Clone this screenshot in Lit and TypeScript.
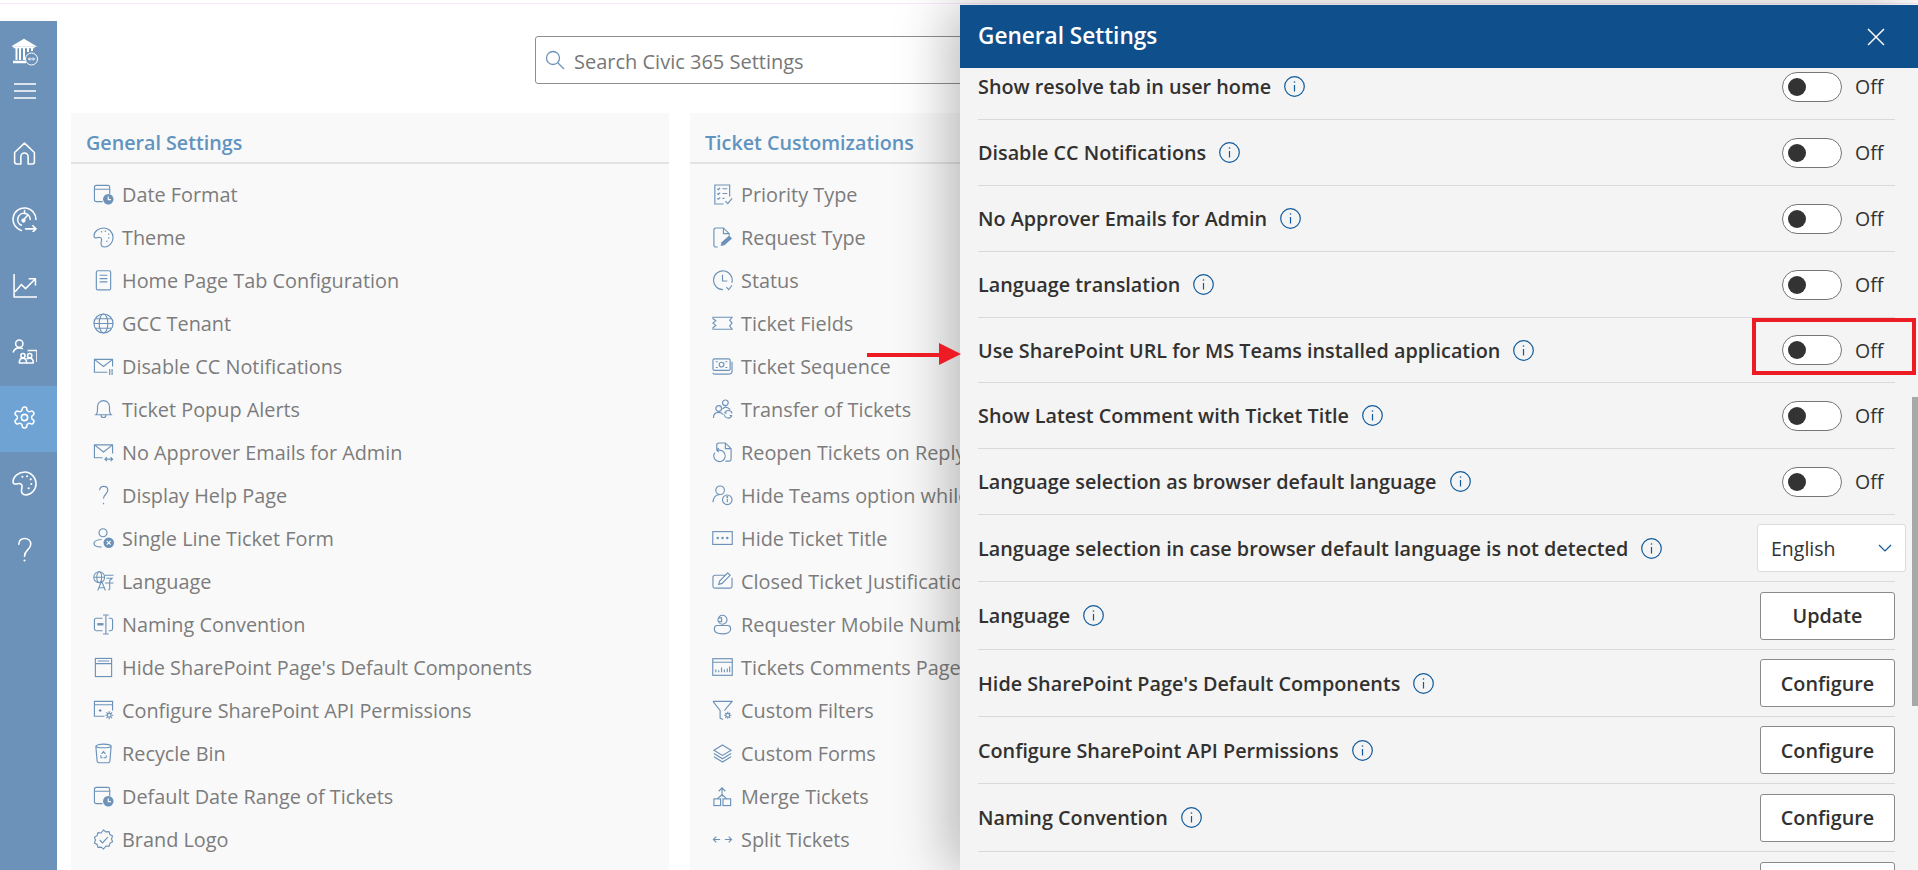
import { LitElement, html, css } from "lit";
import { customElement } from "lit/decorators.js";

const ICONS: Record<string, any> = {
  date: html`<svg viewBox="0 0 22 22" fill="none" stroke="currentColor" stroke-width="1.2"><path d="M10 18.500H3.500a2 2 0 0 1-2-2V3.500a2 2 0 0 1 2-2h12a2 2 0 0 1 2 2v7M1.500 5.500h16"/><circle cx="16" cy="16" r="5.500" fill="currentColor" stroke="none"/><path d="M16 13v3.300h2.800" stroke="#fff"/></svg>`,
  theme: html`<svg viewBox="0 0 22 22" fill="none" stroke="currentColor" stroke-width="1.2"><path d="M11.500 1C6 1 1 4.600 1 9.500c0 1.600 1.600 2.200 3.200 1.700 2.500-.8 4.800-.2 4.800 2 0 1.500-.6 2.300-.6 3.800 0 2.500 1.600 4 3.600 4 5 0 9-4.500 9-10S16.500 1 11.500 1z"/><g fill="currentColor" stroke="none"><circle cx="9" cy="5" r=".8"/><circle cx="13" cy="4.500" r=".8"/><circle cx="16.500" cy="7.500" r=".8"/><circle cx="16.500" cy="11.500" r=".8"/><circle cx="14.500" cy="15" r=".8"/></g></svg>`,
  doc: html`<svg viewBox="0 0 22 22" fill="none" stroke="currentColor" stroke-width="1.2"><rect x="3.500" y=".8" width="15" height="20" rx="1.500"/><path d="M7 5.500h8M7 9h8M7 12.500h8"/></svg>`,
  globe: html`<svg viewBox="0 0 22 22" fill="none" stroke="currentColor" stroke-width="1.2"><circle cx="11" cy="11" r="10"/><ellipse cx="11" cy="11" rx="4.500" ry="10"/><path d="M1 11h20M2.500 6h17M2.500 16h17"/></svg>`,
  mailbar: html`<svg viewBox="0 0 22 22" fill="none" stroke="currentColor" stroke-width="1.2"><path d="M15 17H1.500V3.500h19V11M1.500 3.500 11 11l9.500-7.500M17.500 13.500V20M20 13.500V20"/></svg>`,
  bell: html`<svg viewBox="0 0 22 22" fill="none" stroke="currentColor" stroke-width="1.2"><path d="M3 16.500c1.300-1.200 1.700-2.500 1.700-4.500V8a6.300 6.300 0 0 1 12.600 0v4c0 2 .4 3.300 1.700 4.500zM8.500 17c0 3.200 5 3.200 5 0"/></svg>`,
  mailarrow: html`<svg viewBox="0 0 22 22" fill="none" stroke="currentColor" stroke-width="1.2"><path d="M10 16.500H1.500V3h19v9M1.500 3 11 10.500 20.500 3M12.500 18h8M14.500 16l-2 2 2 2M18.500 16l2 2-2 2"/></svg>`,
  help: html`<svg viewBox="0 0 22 22" fill="none" stroke="currentColor" stroke-width="1.2"><path d="M6.800 5.500C7.200 3 9 1.500 11.200 1.500c2.500 0 4.300 1.700 4.300 4 0 3.800-4.500 4.200-4.500 9"/><circle cx="11" cy="19.500" r=".8" fill="currentColor" stroke="none"/></svg>`,
  userx: html`<svg viewBox="0 0 22 22" fill="none" stroke="currentColor" stroke-width="1.200"><circle cx="10.500" cy="5" r="4.200"/><path d="M9 12c-4 .2-8 1.600-8 4.300C1 18.500 4 20 9 20"/><circle cx="16.500" cy="15.500" r="5.500" fill="currentColor" stroke="none"/><path d="m14.500 13.500 4 4m0-4-4 4" stroke="#fff"/></svg>`,
  lang: html`<svg viewBox="0 0 22 22" fill="none" stroke="currentColor" stroke-width="1.100"><circle cx="6.500" cy="6.500" r="5.700"/><ellipse cx="6.500" cy="6.500" rx="2.500" ry="5.700"/><path d="M1 6.500h11M12.500 4.500h9M14 7.500h6l-2.500 2.500v9l-1.500 1M12.500 12.500h9M9 10.500 5 20.500M9 10.500l4 10M6.200 17.500h5.600"/></svg>`,
  naming: html`<svg viewBox="0 0 22 22" fill="none" stroke="currentColor" stroke-width="1.200"><path d="M10 4.500H3.500a2 2 0 0 0-2 2v9a2 2 0 0 0 2 2H10M16.500 4.500h2a2 2 0 0 1 2 2v9a2 2 0 0 1-2 2h-2M13.500 1v20M10.500 1h6M10.500 21h6"/><rect x="4.500" y="9.500" width="6.500" height="2.500" fill="currentColor" stroke="none"/></svg>`,
  page: html`<svg viewBox="0 0 22 22" fill="none" stroke="currentColor" stroke-width="1.200"><rect x="2.500" y="1.500" width="17" height="19"/><path d="M2.500 7h17M5 4.200h12" /></svg>`,
  winGear: html`<svg viewBox="0 0 22 22" fill="none" stroke="currentColor" stroke-width="1.200"><path d="M12 17H1.500V1.500h19V11M1.500 5h19"/><path d="M7.500 9.500v3M6 11h3" /><circle cx="17" cy="16" r="2" /><path d="M17 11.800v1.800M17 18.400v1.800M12.800 16h1.800M19.400 16h1.800M14 13l1.300 1.300M18.700 17.700 20 19M14 19l1.300-1.300M18.700 14.300 20 13"/></svg>`,
  bin: html`<svg viewBox="0 0 22 22" fill="none" stroke="currentColor" stroke-width="1.200"><path d="M3 3.500c0-3 16-3 16 0l-1.300 15.500a2 2 0 0 1-2 1.700H6.300a2 2 0 0 1-2-1.700zM3 3.500c2 2 14 2 16 0"/><path d="M9 11.500l2-2.500 2 2.500M14 13l-.5 2.500H11M8 13l.5 2.500H10"/></svg>`,
  badge: html`<svg viewBox="0 0 22 22" fill="none" stroke="currentColor" stroke-width="1.200"><path d="m11 1 2.600 2 3.200-.3.900 3.100 2.800 1.600-1.100 3 1.100 3-2.800 1.600-.9 3.100-3.200-.3L11 21l-2.600-2-3.200.3-.9-3.100-2.800-1.600 1.100-3-1.100-3 2.800-1.600.9-3.100 3.200.3z"/><path d="m7 11.500 3 3 5.500-6"/></svg>`,
  priority: html`<svg viewBox="0 0 22 22" fill="none" stroke="currentColor" stroke-width="1.200"><path d="M12 21H3V1h15.500v12"/><path d="m5.500 5 1.200 1 1.800-2M11 5h5M5.500 10l1.200 1 1.800-2M11 10h5M5.500 15l1.200 1 1.800-2M11 15h2M14 18l2.500 2.500L21 15"/></svg>`,
  request: html`<svg viewBox="0 0 22 22" fill="none" stroke="currentColor" stroke-width="1.200"><path d="M6 21H4a2 2 0 0 1-2-2V3a2 2 0 0 1 2-2h8l6 6v2M12 1v6h6"/><path d="m9 20 1-4 8-7 3 3-8 7z" fill="currentColor" stroke="none"/></svg>`,
  status: html`<svg viewBox="0 0 22 22" fill="none" stroke="currentColor" stroke-width="1.200"><path d="M11.500 20.500a9.800 9.800 0 1 1 9.300-7"/><path d="M11 5v6.500h5M15 18l2.500 2.500L21 16"/></svg>`,
  ticket: html`<svg viewBox="0 0 22 22" fill="none" stroke="currentColor" stroke-width="1.200"><path d="M1 6V4.500h20l-2.500 3 2.500 3-2.500 3 2.500 3.500H1v-1.500l3-2.500-3-2.500 3-2.500z"/></svg>`,
  seq: html`<svg viewBox="0 0 22 22" fill="none" stroke="currentColor" stroke-width="1.200"><rect x="1" y="3" width="18" height="12" rx="1.500"/><circle cx="10" cy="9" r="2.500"/><path d="M4 6h2M14 12h2M4 12h2M14 6h2M1 17.500c0 1 1 1.500 2 1.500h14c2 0 4-1 4-3V6"/></svg>`,
  transfer: html`<svg viewBox="0 0 22 22" fill="none" stroke="currentColor" stroke-width="1.200"><circle cx="14" cy="4" r="3"/><circle cx="7" cy="10" r="3"/><path d="M1.500 20c0-4 2.500-6 5.500-6s4 1 5 2.500M11 10.500c1-1 2-2 3-2s3 .5 5 2.500M21 15c-.5-2-2-3-4-3s-3 1-3.500 2.500l2 .5M13 16.500c.5 2.500 2 3.500 4 3.500s3-1 3.500-2.500l-2-.5"/></svg>`,
  reopen: html`<svg viewBox="0 0 22 22" fill="none" stroke="currentColor" stroke-width="1.200"><path d="M5 8V3a2 2 0 0 1 2-2h7l6 6v11a2 2 0 0 1-2 2h-4M14 1v6h6"/><path d="M3 11a6 6 0 1 0 5-2.500H5M7 6.500l-2 2 2 2"/></svg>`,
  userinfo: html`<svg viewBox="0 0 22 22" fill="none" stroke="currentColor" stroke-width="1.200"><circle cx="8.500" cy="5.500" r="4.500"/><path d="M1 18c.5-5 3.500-8 7.500-8"/><circle cx="16" cy="15.500" r="5"/><path d="M16 14.500v3.500"/><circle cx="16" cy="12.700" r=".5" fill="currentColor"/></svg>`,
  dots: html`<svg viewBox="0 0 22 22" fill="none" stroke="currentColor" stroke-width="1.200"><rect x=".8" y="3.800" width="20.400" height="13.400"/><g fill="currentColor" stroke="none"><circle cx="6" cy="10.500" r="1.300"/><circle cx="11" cy="10.500" r="1.300"/><circle cx="16" cy="10.500" r="1.300"/></g></svg>`,
  edit: html`<svg viewBox="0 0 22 22" fill="none" stroke="currentColor" stroke-width="1.200"><path d="M14 4.500H3a2 2 0 0 0-2 2V16a2 2 0 0 0 2 2h16a2 2 0 0 0 2-2V7"/><path d="m7 14 1-3.500L16.500 2l2.500 2.500-8.500 8.500z"/></svg>`,
  requester: html`<svg viewBox="0 0 22 22" fill="none" stroke="currentColor" stroke-width="1.200"><circle cx="11" cy="6" r="4.700"/><path d="M7 4h3v4H7"/><path d="M7 12H5.500C3 12 2.500 14 2.500 16c0 3 3.500 4.800 8.500 4.800s8.500-1.800 8.500-4.800c0-2-.5-4-3-4H7z"/></svg>`,
  bars: html`<svg viewBox="0 0 22 22" fill="none" stroke="currentColor" stroke-width="1.200"><rect x=".8" y="1.800" width="20.400" height="17.400"/><path d="M.8 5.500h20.400M4 16v-3M7 16v-2M10 16v-5M13 16v-3M16 16v-4M18.500 16v-6"/></svg>`,
  filter: html`<svg viewBox="0 0 22 22" fill="none" stroke="currentColor" stroke-width="1.200"><path d="M1 1.500h20L13 11M1 1.500 8.500 11v8l3 1.500"/><circle cx="16.500" cy="16" r="2"/><path d="M16.500 12.300v1.700M16.500 18v1.700M12.800 16h1.700M18.500 16h1.700M13.900 13.400l1.200 1.200M17.900 17.400l1.200 1.200M13.900 18.600l1.200-1.200M17.900 14.600l1.200-1.200"/></svg>`,
  layers: html`<svg viewBox="0 0 22 22" fill="none" stroke="currentColor" stroke-width="1.200"><path d="m11 2 9 5.500-9 5.500-9-5.500zM2 11l9 5.500 9-5.500M2 14.500 11 20l9-5.500"/></svg>`,
  merge: html`<svg viewBox="0 0 22 22" fill="none" stroke="currentColor" stroke-width="1.200"><rect x="2" y="13.500" width="7" height="7"/><rect x="11.500" y="13.500" width="8" height="7"/><path d="M10.500 2v9M7 5.500 10.500 2 14 5.500M5.500 13.500 10.500 9l5 4.500"/></svg>`,
  split: html`<svg viewBox="0 0 22 22" fill="none" stroke="currentColor" stroke-width="1.200"><path d="M1.500 11h7M4.500 8l-3 3 3 3M13.500 11h7M17.500 8l3 3-3 3"/></svg>`,
};

const GENERAL: [string, string][] = [
  ["date", "Date Format"], ["theme", "Theme"], ["doc", "Home Page Tab Configuration"], ["globe", "GCC Tenant"],
  ["mailbar", "Disable CC Notifications"], ["bell", "Ticket Popup Alerts"], ["mailarrow", "No Approver Emails for Admin"],
  ["help", "Display Help Page"], ["userx", "Single Line Ticket Form"], ["lang", "Language"], ["naming", "Naming Convention"],
  ["page", "Hide SharePoint Page's Default Components"], ["winGear", "Configure SharePoint API Permissions"], ["bin", "Recycle Bin"],
  ["date", "Default Date Range of Tickets"], ["badge", "Brand Logo"],
];
const TICKET: [string, string][] = [
  ["priority", "Priority Type"], ["request", "Request Type"], ["status", "Status"], ["ticket", "Ticket Fields"],
  ["seq", "Ticket Sequence"], ["transfer", "Transfer of Tickets"], ["reopen", "Reopen Tickets on Reply"],
  ["userinfo", "Hide Teams option while creating tickets"], ["dots", "Hide Ticket Title"], ["edit", "Closed Ticket Justification"],
  ["requester", "Requester Mobile Number"], ["bars", "Tickets Comments Page"], ["filter", "Custom Filters"], ["layers", "Custom Forms"],
  ["merge", "Merge Tickets"], ["split", "Split Tickets"],
];

type Row = { label: string; kind: "toggle" | "select" | "update" | "configure"; h: number };
const ROWS: Row[] = [
  { label: "Show resolve tab in user home", kind: "toggle", h: 66 },
  { label: "Disable CC Notifications", kind: "toggle", h: 66 },
  { label: "No Approver Emails for Admin", kind: "toggle", h: 66 },
  { label: "Language translation", kind: "toggle", h: 66 },
  { label: "Use SharePoint URL for MS Teams installed application", kind: "toggle", h: 65 },
  { label: "Show Latest Comment with Ticket Title", kind: "toggle", h: 66 },
  { label: "Language selection as browser default language", kind: "toggle", h: 66 },
  { label: "Language selection in case browser default language is not detected", kind: "select", h: 67 },
  { label: "Language", kind: "update", h: 68 },
  { label: "Hide SharePoint Page's Default Components", kind: "configure", h: 67 },
  { label: "Configure SharePoint API Permissions", kind: "configure", h: 67 },
  { label: "Naming Convention", kind: "configure", h: 68 },
  { label: "", kind: "configure", h: 68 },
];

@customElement("app-root")
export class AppRoot extends LitElement {
  static styles = css`
    :host { display: block; position: relative; width: 1918px; height: 870px; overflow: hidden; background: #fff;
      font-family: "Open Sans", "Noto Sans", sans-serif; }
    * { box-sizing: border-box; }
    .topline { height: 4px; border-bottom: 1px solid #f8e8f8; }
    .page { display: flex; height: 866px; }
    .side { width: 57px; margin-top: 17px; background: #6c92b9; color: #fff; flex: none; display: flex; flex-direction: column; }
    .brand { height: 101px; display: flex; flex-direction: column; align-items: center; padding: 17px 8px 0 0; gap: 17px; }
    .brand svg { display: block; }
    .nav { height: 66px; display: flex; align-items: center; justify-content: center; padding: 0 8px 4px 0; }
    .nav.active { background: #6fa3d3; }
    .nav svg { width: 25px; height: 25px; display: block; }
    .main { flex: 1; min-width: 0; padding: 32px 0 0 14px; }
    .search { margin-left: 464px; width: 700px; height: 48px; border: 1px solid #8e8e8e; border-radius: 3px; display: flex; align-items: center;
      padding: 2px 0 0 9px; gap: 9px; color: #777; font-size: 20px; }
    .search svg { width: 20px; height: 20px; display: block; color: #6c92b9; margin-top: -3px; }
    .panels { display: flex; gap: 21px; margin-top: 29px; }
    .panel { width: 598px; height: 800px; background: #f9f9f9; flex: none; overflow: hidden; }
    .phead { height: 51px; border-bottom: 2px solid #e2e2e2; padding: 16px 0 0 15px; font-size: 19.7px; font-weight: 600; line-height: 27px; color: #6193c0; }
    .list { padding: 9px 0 0 22px; }
    .item { height: 43px; display: flex; align-items: center; font-size: 19.85px; color: #7c7c7c; gap: 8px; white-space: nowrap; }
    .item svg { width: 21px; height: 21px; flex: none; color: #6c92b9; display: block; }
    .drawer { position: absolute; left: 960px; top: 5px; width: 958px; height: 865px; background: #f4f4f4;
      box-shadow: -12px 0 50px rgba(0,0,0,.26); display: flex; flex-direction: column; }
    .dhead { height: 63px; flex: none; background: #0f4f8b; color: #fff; display: flex; align-items: center; justify-content: space-between;
      padding: 0 33px 3px 18px; font-size: 22.6px; font-weight: 600; }
    .dhead svg { width: 18px; height: 18px; display: block; margin-top: 3px; }
    .dbody { flex: 1; overflow: hidden; padding: 0 23px 0 18px; position: relative; }
    .rows { margin-top: -14px; }
    .row { display: flex; align-items: center; justify-content: space-between; border-bottom: 1px solid #d9d9d9; color: #323130; }
    .label { display: flex; align-items: center; gap: 13px; font-size: 19.8px; font-weight: 600; white-space: nowrap; }
    .label svg { width: 21px; height: 21px; color: #0f5a9c; display: block; }
    .toggle { display: flex; align-items: center; width: 113px; }
    .track { width: 60px; height: 30px; border: 1px solid #767676; border-radius: 15px; background: #fff; padding-left: 5px; display: flex; align-items: center; flex: none; }
    .knob { width: 18px; height: 18px; border-radius: 50%; background: #333; }
    .off { margin-left: 13px; font-size: 19.5px; color: #323130; }
    .select { width: 149px; height: 48px; margin-right: -11px; background: #fff; border: 1px solid #dcdcdc; border-radius: 3px; display: flex; align-items: center;
      justify-content: space-between; padding: 0 13px; font-size: 19.5px; }
    .select svg { width: 14px; height: 14px; color: #0f5a9c; display: block; }
    .btn { width: 135px; height: 48px; background: #fff; border: 1px solid #8a8a8a; border-radius: 3px; display: flex; align-items: center; justify-content: center;
      font-size: 19.8px; font-weight: 600; color: #323130; }
    .thumb { position: absolute; right: 0; top: 329px; width: 6px; height: 309px; background: #a8a8a8; }
    .redbox { position: absolute; left: 1752px; top: 318px; width: 164px; height: 57px; border: 4px solid #ed1c24; }
    .arrow { position: absolute; left: 867px; top: 342px; width: 95px; height: 24px; display: block; }
  `;

  private row(r: Row) {
    const info = html`<svg viewBox="0 0 21 21" fill="none" stroke="currentColor" stroke-width="1.200"><circle cx="10.500" cy="10.500" r="9.800"/><path d="M10.500 9v6.500"/><circle cx="10.500" cy="6" r=".8" fill="currentColor" stroke="none"/></svg>`;
    let ctl;
    if (r.kind === "toggle") ctl = html`<div class="toggle"><div class="track"><div class="knob"></div></div><span class="off">Off</span></div>`;
    else if (r.kind === "select") ctl = html`<div class="select"><span>English</span><svg viewBox="0 0 14 14" fill="none" stroke="currentColor" stroke-width="1.200"><path d="m1 4 6 6 6-6"/></svg></div>`;
    else ctl = html`<div class="btn">${r.kind === "update" ? "Update" : "Configure"}</div>`;
    return html`<div class="row" style="height:${r.h}px">
      <div class="label">${r.label ? html`<span>${r.label}</span>${info}` : ""}</div>${ctl}
    </div>`;
  }

  render() {
    const nav = (body: any, active = false) => html`<div class="nav ${active ? "active" : ""}">${body}</div>`;
    return html`
      <div class="topline"></div>
      <div class="page">
        <aside class="side">
          <div class="brand">
            <svg width="26" height="28" viewBox="0 0 26 28" fill="none" stroke="#fff" stroke-width="1.300">
              <path d="M1 8 12 1.500 23 8z" fill="#fff"/>
              <path d="M1.500 9.500h21" stroke-width="1.500"/>
              <path d="M4.500 10v12M8 10v12M12 10v12M16 10v4M20 10v3" stroke-width="2"/>
              <path d="M1 24h13" stroke-width="2.500"/>
              <circle cx="19.500" cy="21" r="6" fill="#6c92b9" stroke-width="1"/>
              <path d="M16.500 21h6M18 19.500 16.500 21l1.500 1.500M21 19.500l1.500 1.500-1.500 1.500" stroke-width="1"/>
            </svg>
            <svg width="22" height="16" viewBox="0 0 22 16" stroke="#fff" stroke-width="1.300"><path d="M0 1h22M0 8h22M0 15h22"/></svg>
          </div>
          ${nav(html`<svg viewBox="0 0 24 24" fill="none" stroke="#fff" stroke-width="1.500" stroke-linejoin="round"><path d="M2.500 11 12 2l9.500 9v9a2 2 0 0 1-2 2h-4v-7a3.500 3.500 0 0 0-7 0v7h-4a2 2 0 0 1-2-2z"/></svg>`)}
          ${nav(html`<svg viewBox="0 0 24 24" fill="none" stroke="#fff" stroke-width="1.500" stroke-linecap="round" stroke-linejoin="round"><path d="M23 12A11 11 0 1 0 9 22.500M17.500 12A6 6 0 1 0 9 17.500M11 12.500 15 8M23 21H13M20 18l3 3-3 3M12 3.500V6"/><circle cx="11" cy="13" r="1.300" fill="#fff"/></svg>`)}
          ${nav(html`<svg viewBox="0 0 24 24" fill="none" stroke="#fff" stroke-width="1.500" stroke-linejoin="round"><path d="M2 1v22h22M3 18l6-7 4 4 9-9M16 5.500h6.500V12"/></svg>`)}
          ${nav(html`<svg viewBox="0 0 24 24" fill="none" stroke="#fff" stroke-width="1.500" stroke-linejoin="round"><circle cx="7" cy="4.500" r="3.500"/><path d="M1 13c1-3 3-4.500 6-4.500 1.500 0 2.500.4 3.500 1M15 11h9v11"/><circle cx="10.500" cy="16" r="2"/><path d="M7 23c0-3 1.500-4.500 3.500-4.500S14 20 14 23z"/><circle cx="17" cy="16" r="2"/><path d="M14 19c1-.5 2-.5 3-.5 2 0 3.500 1.500 3.500 4.500H14"/></svg>`)}
          ${nav(html`<svg viewBox="0 0 24 24" fill="none" stroke="#fff" stroke-width="1.500" stroke-linejoin="round"><path d="M12.220 2h-.44a2 2 0 0 0-2 2v.18a2 2 0 0 1-1 1.730l-.43.250a2 2 0 0 1-2 0l-.15-.08a2 2 0 0 0-2.730.730l-.22.380a2 2 0 0 0 .730 2.730l.15.1a2 2 0 0 1 1 1.720v.51a2 2 0 0 1-1 1.740l-.15.09a2 2 0 0 0-.730 2.730l.22.380a2 2 0 0 0 2.730.730l.15-.08a2 2 0 0 1 2 0l.43.250a2 2 0 0 1 1 1.730V20a2 2 0 0 0 2 2h.44a2 2 0 0 0 2-2v-.18a2 2 0 0 1 1-1.730l.43-.250a2 2 0 0 1 2 0l.15.08a2 2 0 0 0 2.730-.730l.22-.39a2 2 0 0 0-.730-2.730l-.15-.08a2 2 0 0 1-1-1.740v-.5a2 2 0 0 1 1-1.740l.15-.09a2 2 0 0 0 .730-2.730l-.22-.38a2 2 0 0 0-2.730-.730l-.15.08a2 2 0 0 1-2 0l-.43-.250a2 2 0 0 1-1-1.730V4a2 2 0 0 0-2-2z"/><circle cx="12" cy="12" r="3"/></svg>`, true)}
          ${nav(html`<svg viewBox="0 0 24 24" fill="none" stroke="#fff" stroke-width="1.500"><path d="M12.500 1C6.500 1 1 5 1 10.500c0 1.700 1.700 2.400 3.500 1.900 2.800-.9 5.200-.2 5.200 2.200 0 1.600-.6 2.500-.6 4.200 0 2.700 1.700 4.200 4 4.200 5.500 0 10-5 10-11S18 1 12.500 1z"/><g fill="#fff" stroke="none"><circle cx="10" cy="5.500" r="1"/><circle cx="14.500" cy="5" r="1"/><circle cx="18" cy="8" r="1"/><circle cx="18.500" cy="12.500" r="1"/><circle cx="16" cy="16.500" r="1"/></g></svg>`)}
          ${nav(html`<svg viewBox="0 0 24 24" fill="none" stroke="#fff" stroke-width="1.500" stroke-linecap="round"><path d="M6.500 7c.3-3.500 2.700-5.500 5.700-5.500 3.300 0 5.800 2.300 5.800 5.500 0 5-6 5.500-6 11.500"/><circle cx="12" cy="22.500" r="1" fill="#fff" stroke="none"/></svg>`)}
        </aside>
        <main class="main">
          <div class="search">
            <svg viewBox="0 0 20 20" fill="none" stroke="currentColor" stroke-width="1.300"><circle cx="8" cy="8" r="6.500"/><path d="m13 13 6 6"/></svg>
            <span>Search Civic 365 Settings</span>
          </div>
          <div class="panels">
            ${[["General Settings", GENERAL], ["Ticket Customizations", TICKET]].map(([title, items]: any) => html`
              <section class="panel">
                <div class="phead">${title}</div>
                <div class="list">
                  ${items.map(([ic, t]: [string, string]) => html`<div class="item">${ICONS[ic]}<span>${t}</span></div>`)}
                </div>
              </section>`)}
          </div>
        </main>
      </div>
      <div class="drawer">
        <div class="dhead"><span>General Settings</span>
          <svg viewBox="0 0 18 18" stroke="#fff" stroke-width="1.500"><path d="m1 1 16 16M17 1 1 17"/></svg>
        </div>
        <div class="dbody">
          <div class="rows">${ROWS.map((r) => this.row(r))}</div>
          <div class="thumb"></div>
        </div>
      </div>
      <svg class="arrow" viewBox="0 0 95 24"><path d="M0 11h72V1l22 11-22 11v-8H0z" fill="#ed1c24"/></svg>
      <div class="redbox"></div>
    `;
  }
}
